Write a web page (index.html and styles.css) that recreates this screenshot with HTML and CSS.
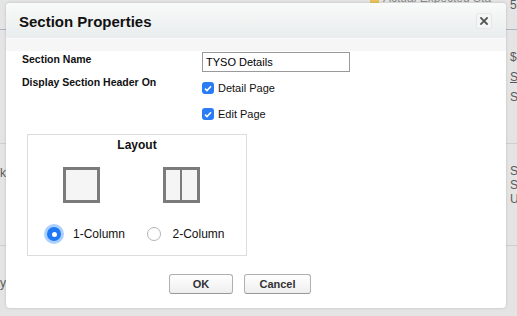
FILE: index.html
```html
<!DOCTYPE html>
<html>
<head>
<meta charset="utf-8">
<link rel="stylesheet" href="styles.css">
</head>
<body>
<div class="page">
  <div class="bg-row bg-top">
    <div class="bg-left"></div>
    <div class="bg-mid"><span class="bg-flag"></span><span class="bg-faint">Actual Expected Sta</span></div>
    <div class="bg-right"><span>5</span></div>
  </div>
  <div class="bg-row bg-r2">
    <div class="bg-left"></div>
    <div class="bg-mid"></div>
    <div class="bg-right"><span>$</span><span class="u">S</span><span>S</span></div>
  </div>
  <div class="bg-row bg-r3">
    <div class="bg-left"><span>Link</span></div>
    <div class="bg-mid"></div>
    <div class="bg-right tight"><span>S</span><span>S</span><span>U</span></div>
  </div>
  <div class="bg-row bg-r4">
    <div class="bg-left"><span>Activity</span></div>
    <div class="bg-mid"></div>
    <div class="bg-right"></div>
  </div>
</div>

<div class="dialog">
  <div class="dlg-head">
    <h2 class="dlg-title">Section Properties</h2>
    <button class="dlg-close" aria-label="Close">
      <svg width="8" height="8" viewBox="0 0 8 8"><path d="M1 1L7 7M7 1L1 7" stroke="#555" stroke-width="1.8" stroke-linecap="square"/></svg>
    </button>
  </div>
  <div class="dlg-body">
    <div class="form">
      <label class="lbl lbl-1">Section Name</label>
      <div><input class="txt" type="text" value="TYSO Details"></div>
      <div class="lbl lbl-2">Display Section Header On</div>
      <div class="checks">
        <div class="check"><span class="cb"><svg width="8" height="7" viewBox="0 0 8 7"><path d="M1 3.6L3 5.6L7 1.2" fill="none" stroke="#fff" stroke-width="1.5"/></svg></span>Detail Page</div>
        <div class="check"><span class="cb"><svg width="8" height="7" viewBox="0 0 8 7"><path d="M1 3.6L3 5.6L7 1.2" fill="none" stroke="#fff" stroke-width="1.5"/></svg></span>Edit Page</div>
      </div>
    </div>

    <div class="layout-box">
      <div class="layout-title">Layout</div>
      <div class="options">
        <div class="opt">
          <div class="icon"></div>
          <div class="radio-row"><span class="radio on"></span>1-Column</div>
        </div>
        <div class="opt">
          <div class="icon two"><span></span><span></span></div>
          <div class="radio-row"><span class="radio"></span>2-Column</div>
        </div>
      </div>
    </div>

    <div class="buttons">
      <button class="btn ok">OK</button>
      <button class="btn cancel">Cancel</button>
    </div>
  </div>
</div>
</body>
</html>
```

FILE: styles.css
```css
* { box-sizing: border-box; }
html, body { margin: 0; padding: 0; }
body {
  width: 517px;
  height: 316px;
  overflow: hidden;
  background: #e4e4e4;
  font-family: "Liberation Sans", Arial, sans-serif;
  color: #000;
  position: relative;
}

/* background page (behind the modal) */
.page {
  display: flex;
  flex-direction: column;
  height: 316px;
  color: #5a5a5a;
  font-size: 12px;
}
.bg-row { display: flex; }
.bg-top { height: 30px; border-bottom: 1px solid #a9b6c8; }
.bg-r2 { height: 114px; border-bottom: 1px solid #cfcfcf; }
.bg-r3 { height: 102px; border-bottom: 1px solid #cfcfcf; }
.bg-r4 { flex: 1; }
.bg-left {
  width: 6px;
  display: flex;
  flex-direction: column;
  align-items: flex-end;
  white-space: nowrap;
}
.bg-r3 .bg-left { padding-top: 22px; }
.bg-r4 .bg-left { padding-top: 30px; }
.bg-mid { flex: 1; }
.bg-top .bg-mid {
  display: flex;
  align-items: flex-start;
  padding-left: 364px;
  gap: 4px;
  height: 3px;
  overflow: hidden;
}
.bg-flag { width: 9px; height: 8px; background: #e7c35a; margin-top: -4px; flex: none; }
.bg-faint { margin-top: -9px; color: #8a8a8a; white-space: nowrap; }
.bg-right {
  width: 7px;
  display: flex;
  flex-direction: column;
  white-space: nowrap;
  line-height: 20px;
}
.bg-top .bg-right { margin-top: -5px; }
.bg-r2 .bg-right { padding-top: 17px; }
.bg-r3 .bg-right { padding-top: 20px; }
.bg-right.tight { line-height: 14px; }
.u { text-decoration: underline; }

/* dialog */
.dialog {
  position: absolute;
  left: 6px;
  top: 3px;
  width: 500px;
  height: 305px;
  background: #fff;
  border-radius: 4px;
  box-shadow: 0 0 3px rgba(0,0,0,0.18);
  overflow: hidden;
}
.dlg-head {
  height: 36px;
  display: flex;
  align-items: center;
  justify-content: space-between;
  padding: 0 14px 0 13px;
  background: linear-gradient(#f9fafa, #e9eded);
  border-bottom: 1px solid #fbfbfb;
}
.dlg-title {
  margin: 0;
  font-size: 15px;
  font-weight: bold;
  color: #111;
  padding-top: 1px;
}
.dlg-close {
  width: 16px;
  height: 16px;
  padding: 0;
  margin-top: 1px;
  border: 1px solid #e4e8e8;
  border-radius: 2px;
  background: #f4f6f6;
  display: flex;
  align-items: center;
  justify-content: center;
}

.dlg-body {
  background: linear-gradient(#f6f6f6 0, #f6f6f6 12px, #fff 12px);
}
.form {
  display: grid;
  grid-template-columns: 180px 1fr;
  padding: 13px 0 0 16px;
  font-size: 11px;
}
.lbl {
  font-weight: bold;
  font-size: 10.5px;
  line-height: 13px;
  color: #111;
}
.lbl-1 { padding-top: 1px; }
.lbl-2 { padding-top: 4px; }
.txt {
  display: block;
  width: 148px;
  height: 20px;
  border: 1px solid #9a9a9a;
  padding: 0 3px;
  font-family: "Liberation Sans", Arial, sans-serif;
  font-size: 11px;
  color: #000;
  background: #fff;
  outline: none;
}
.checks { padding-top: 3px; display: flex; flex-direction: column; }
.check {
  height: 26px;
  display: flex;
  align-items: center;
  gap: 4px;
  font-size: 11px;
  color: #111;
}
.cb {
  width: 12px;
  height: 12px;
  border-radius: 3px;
  background: #2a7cf5;
  display: flex;
  align-items: center;
  justify-content: center;
}

.layout-box {
  margin: 7px 0 0 21px;
  width: 220px;
  height: 122px;
  border: 1px solid #dcdcdc;
  padding-top: 3px;
}
.layout-title {
  text-align: center;
  font-size: 12px;
  line-height: 14px;
  font-weight: bold;
  color: #111;
}
.options {
  display: flex;
  padding: 15px 0 0 19px;
}
.opt { width: 103px; display: flex; flex-direction: column; }
.icon {
  margin-left: 16px;
  width: 37px;
  height: 36px;
  border: 3px solid #7b7b7b;
  background: #f5f5f5;
  display: flex;
}
.icon.two span { flex: 1; }
.icon.two span + span { border-left: 2px solid #7b7b7b; }
.radio-row {
  margin-top: 24px;
  display: flex;
  align-items: center;
  gap: 12px;
  font-size: 12px;
  color: #111;
  height: 14px;
}
.radio {
  width: 14px;
  height: 14px;
  border-radius: 50%;
  border: 1px solid #b3b3b3;
  background: #fff;
  display: flex;
  align-items: center;
  justify-content: center;
}
.radio.on {
  border: none;
  background: #1f78f4;
  box-shadow: 0 0 0 3px rgba(72, 150, 250, 0.45);
}
.radio.on::after {
  content: "";
  width: 5px;
  height: 5px;
  border-radius: 50%;
  background: #fff;
}

.buttons {
  display: flex;
  gap: 11px;
  padding: 18px 0 0 163px;
}
.btn {
  height: 20px;
  border: 1px solid #b0b0b0;
  border-bottom-color: #999;
  border-radius: 3px;
  background: linear-gradient(#ffffff, #eeeeee);
  font-family: "Liberation Sans", Arial, sans-serif;
  font-size: 11px;
  font-weight: bold;
  color: #333;
  padding: 0;
}
.ok { width: 64px; }
.cancel { width: 67px; }
```
